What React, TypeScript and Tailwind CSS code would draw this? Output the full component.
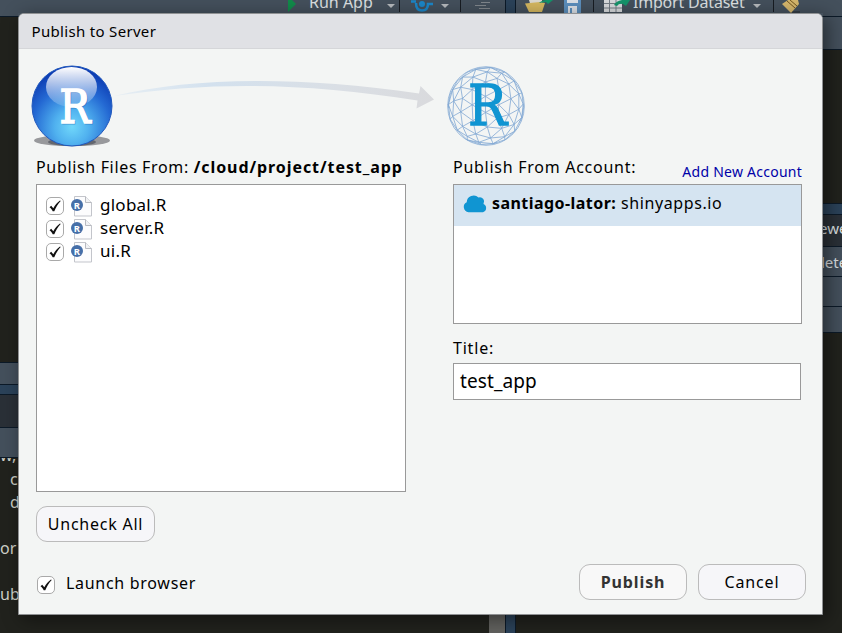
import React from "react";

type Vec = [number, number, number];

const norm = (v: Vec): Vec => {
  const l = Math.hypot(v[0], v[1], v[2]);
  return [v[0] / l, v[1] / l, v[2] / l];
};

// Front-facing edges of a geodesic sphere, projected onto the plane.
function geodesic(n: number, r: number, c: number): string {
  const t = (1 + Math.sqrt(5)) / 2;
  const base: Vec[] = (
    [
      [-1, t, 0], [1, t, 0], [-1, -t, 0], [1, -t, 0],
      [0, -1, t], [0, 1, t], [0, -1, -t], [0, 1, -t],
      [t, 0, -1], [t, 0, 1], [-t, 0, -1], [-t, 0, 1],
    ] as Vec[]
  ).map(norm);
  const faces = [
    [0, 11, 5], [0, 5, 1], [0, 1, 7], [0, 7, 10], [0, 10, 11],
    [1, 5, 9], [5, 11, 4], [11, 10, 2], [10, 7, 6], [7, 1, 8],
    [3, 9, 4], [3, 4, 2], [3, 2, 6], [3, 6, 8], [3, 8, 9],
    [4, 9, 5], [2, 4, 11], [6, 2, 10], [8, 6, 7], [9, 8, 1],
  ];
  const seen = new Set<string>();
  const out: string[] = [];
  const turn = (v: Vec): Vec => {
    const a = 0.35, b = 0.25;
    const x = v[0] * Math.cos(a) + v[2] * Math.sin(a);
    const z = -v[0] * Math.sin(a) + v[2] * Math.cos(a);
    return [x, v[1] * Math.cos(b) - z * Math.sin(b), v[1] * Math.sin(b) + z * Math.cos(b)];
  };
  for (const [A, B, C] of faces) {
    const p = (i: number, j: number): Vec => {
      const k = n - i - j;
      return turn(norm([0, 1, 2].map((d) => base[A][d] * i + base[B][d] * j + base[C][d] * k) as Vec));
    };
    const edge = (u: Vec, v: Vec) => {
      if (u[2] + v[2] < -0.1) return;
      const s = [u, v].map((q) => `${(c + q[0] * r).toFixed(1)} ${(c + q[1] * r).toFixed(1)}`).sort();
      const key = s.join("L");
      if (seen.has(key)) return;
      seen.add(key);
      out.push("M" + key);
    };
    for (let i = 0; i < n; i++)
      for (let j = 0; j < n - i; j++) {
        edge(p(i, j), p(i + 1, j));
        edge(p(i, j), p(i, j + 1));
        edge(p(i + 1, j), p(i, j + 1));
      }
  }
  return out.join("");
}

const MESH = geodesic(3, 38, 39);

const Caret = () => (
  <svg className="h-1 w-2 shrink-0" viewBox="0 0 8 4"><path d="M0 0h8L4 4z" fill="#b5b9bd" /></svg>
);

const Divider = () => <span className="h-3 w-px shrink-0 bg-[#171c22]" />;

const Check = () => (
  <span className="flex h-[18px] w-[18px] shrink-0 items-center justify-center rounded-[5px] border border-[#a9a9a9] bg-white">
    <svg width="14" height="14" viewBox="0 0 14 14">
      <path d="M1.500 8.200 3.200 6.800l2.100 2.500C7 6.300 9 3.700 12 1.500l.7.500C9.900 5 7.900 8.500 6.300 12.200H4.700C3.900 10.500 2.900 9.200 1.500 8.200z" fill="#111" />
    </svg>
  </span>
);

const RFile = () => (
  <svg className="shrink-0" width="22" height="22" viewBox="0 0 22 22">
    <path d="M3.500 1.500h11l6 6v13.500h-17z" fill="#fcfcfd" stroke="#c3c5cb" />
    <path d="M14.500 1.500v6h6" fill="#f1f2f4" stroke="#b8bac0" />
    <circle cx="6" cy="10" r="6" fill="#466fa8" />
    <text x="6" y="13.500" textAnchor="middle" fontFamily="Noto Sans, sans-serif" fontSize="9.500" fontWeight="700" fill="#fff">R</text>
  </svg>
);

const Sphere = () => (
  <svg className="shrink-0" width="82" height="84" viewBox="0 0 82 84">
    <defs>
      <radialGradient id="ball" cx="50%" cy="76%" r="72%">
        <stop offset="0" stopColor="#70d7fa" />
        <stop offset=".3" stopColor="#50b1ef" />
        <stop offset=".68" stopColor="#2469d3" />
        <stop offset="1" stopColor="#0c3bb2" />
      </radialGradient>
      <linearGradient id="gloss" x1="0" y1="0" x2="0" y2="1">
        <stop offset="0" stopColor="#fff" />
        <stop offset=".35" stopColor="#fff" stopOpacity=".7" />
        <stop offset="1" stopColor="#fff" stopOpacity=".12" />
      </linearGradient>
    </defs>
    <ellipse cx="41" cy="75.500" rx="38" ry="5.800" fill="#98999c" />
    <ellipse cx="41" cy="77" rx="24" ry="4" fill="#64676e" />
    <circle cx="41" cy="41" r="40" fill="url(#ball)" stroke="#2058bd" />
    <ellipse cx="40.500" cy="22" rx="25.500" ry="20" fill="url(#gloss)" />
    <text x="45" y="58.500" textAnchor="middle" fontFamily="DejaVu Serif, serif" fontSize="46" fill="#225eae" stroke="#225eae" opacity=".45" textLength="31" lengthAdjust="spacingAndGlyphs">R</text>
    <text x="44" y="57.500" textAnchor="middle" fontFamily="DejaVu Serif, serif" fontSize="46" fill="#fff" stroke="#fff" strokeWidth="1.600" textLength="31" lengthAdjust="spacingAndGlyphs">R</text>
  </svg>
);

const Arrow = () => (
  <svg className="shrink-0" width="336" height="84" viewBox="0 0 336 84">
    <defs>
      <linearGradient id="sweep">
        <stop offset="0" stopColor="#d5e4f2" stopOpacity=".4" />
        <stop offset=".3" stopColor="#d3e1ee" />
        <stop offset=".7" stopColor="#dadfe5" />
        <stop offset="1" stopColor="#d9dadd" />
      </linearGradient>
    </defs>
    <path d="M1 31C81 12 185 11 306 28.500l1.500-7.500 13.500 13.500-17.500 9 1-8C193 18 101 16 1 31z" fill="url(#sweep)" />
  </svg>
);

const Geo = () => (
  <svg className="shrink-0" width="78" height="80" viewBox="0 0 78 78" preserveAspectRatio="none">
    <circle cx="39" cy="39" r="38.300" fill="none" stroke="#82a8d4" strokeWidth=".8" />
    <path d={MESH} fill="none" stroke="#82a8d4" strokeWidth=".8" />
    <text x="40.500" y="58" textAnchor="middle" fontFamily="DejaVu Serif, serif" fontSize="55" fill="#1095d2" stroke="#1095d2" strokeWidth="1.300" textLength="39" lengthAdjust="spacingAndGlyphs">R</text>
  </svg>
);

const btn = "flex h-9 items-center justify-center rounded-[11px] border border-[#bbb]";

function Backdrop() {
  return (
    <div className="flex h-[633px] w-[842px] overflow-hidden bg-[#21221d]">
      <div className="flex w-[505px] flex-col">
        <div className="flex h-4 shrink-0 items-start bg-[#44505c] pl-[288px] text-[#dde0e2]">
          <svg className="h-4 w-2 shrink-0" viewBox="0 0 8 16"><path d="M0-4 8 4 0 12z" fill="#118a4a" /></svg>
          <span className="-mt-[10px] ml-[13px] w-[63px] whitespace-nowrap text-[16px] leading-6">Run App</span>
          <span className="mt-1 ml-[15px] flex"><Caret /></span>
          <span className="ml-1 flex"><Divider /></span>
          <svg className="ml-[11px] h-4 w-[23px] shrink-0" viewBox="0 0 23 16">
            <circle cx="11" cy="4" r="3" fill="#1b86c8" />
            <path d="M0 1.500h5M5 3q0 7.500 6 7.500t6-6.500h5" fill="none" stroke="#1b86c8" strokeWidth="2.500" />
          </svg>
          <span className="mt-1 ml-[7px] flex"><Caret /></span>
          <span className="ml-[11px] flex"><Divider /></span>
          <svg className="ml-3.5 h-3 w-4 shrink-0" viewBox="0 0 16 12"><path d="M6 2.500h9M0 5.500h11M4 8.500h11" stroke="#80868c" /></svg>
        </div>
        <div className="h-[346px] shrink-0 border-t border-[#0c1a28]" />
        <div className="h-[22px] shrink-0 border-t border-[#0c1a28] bg-[#44505c]" />
        <div className="h-[11px] shrink-0 border-y border-[#0c1a28] bg-[#2b4259]" />
        <div className="h-8 shrink-0 bg-[#2a3037]" />
        <div className="h-[31px] shrink-0 border-y border-[#0c1a28] bg-[#44505c]" />
        <div className="flex grow">
          <div className="w-[489px] overflow-hidden text-[16px] leading-[23px] text-[#cfd0c8]">
            <div className="-mt-[14px] h-[23px] w-[22px]">w,</div>
            <div className="mt-px h-[23px] pl-[10px]">c</div>
            <div className="h-[23px] pl-[10px]">d</div>
            <div className="mt-[23px] h-[23px]">or</div>
            <div className="mt-[23px] h-[23px]">ub</div>
          </div>
          <div className="w-4 bg-[#62625f]" />
        </div>
      </div>
      <div className="w-[11px] shrink-0 border-x border-[#0c1a28] bg-[#2b4259]" />
      <div className="flex w-[326px] flex-col text-[#dde0e2]">
        <div className="flex h-4 shrink-0 items-start bg-[#44505c] pl-[9px]">
          <svg className="h-[13px] w-7 shrink-0" viewBox="0 0 28 13">
            <path d="M4 0h13v7H6z" fill="#dcdad0" />
            <path d="M0 3.500 15 2l5 1-3 9H4z" fill="#d5b75f" />
            <path d="M14 3q3-3 8-3h6l-5 4-2-2z" fill="#14946b" />
          </svg>
          <svg className="ml-[11px] h-[13px] w-[17px] shrink-0" viewBox="0 0 17 13"><path d="M0 0h17v13H0z" fill="#5c8fbd" /><path d="M3 0h11v3H3zM4 6h9v7H4z" fill="#dce1e7" /><path d="M6 8h2v5H6z" fill="#5c8fbd" /></svg>
          <span className="ml-3 flex"><Divider /></span>
          <svg className="ml-2.5 h-3 w-[26px] shrink-0" viewBox="0 0 26 12">
            <path d="M0 0h18v12H0z" fill="#d7dadd" />
            <path d="M0 3.500h18M0 8h18M5.500 0v12M12 0v12" stroke="#747d86" />
            <path d="M10 5q2-4 8-5h8l-4 6-3-2q-4-1-6 2z" fill="#14946b" />
          </svg>
          <span className="-mt-[10px] ml-[3px] w-[112px] whitespace-nowrap text-[16px] leading-6 tracking-[-0.2px]">Import Dataset</span>
          <span className="mt-1 ml-[8px] flex"><Caret /></span>
          <span className="ml-3 flex"><Divider /></span>
          <svg className="ml-2 h-[13px] w-[19px] shrink-0" viewBox="0 0 19 13"><path d="M8 11h10v2H8z" fill="#343d46" /><path d="M0 4 6 0h10l1 4-8 9z" fill="#d5b66c" /><path d="m5 1 8 7M8 0l7 6" stroke="#72551f" /></svg>
        </div>
        <div className="h-[34px] shrink-0 border-y border-[#0c1a28] bg-[#44505c]" />
        <div className="h-[153px] shrink-0" />
        <div className="h-[11px] shrink-0 border-t border-[#0c1a28] bg-[#2b4259]" />
        <div className="h-8 shrink-0 overflow-hidden border-t border-[#0c1a28] bg-[#2a3037] pl-[303px] text-[15px] leading-[27px]">ewer</div>
        <div className="h-[30px] shrink-0 overflow-hidden border-t border-[#0c1a28] bg-[#44505c] pl-[305px] text-[15px] leading-[30px]">lete</div>
        <div className="h-[30px] shrink-0 border-t border-[#0c1a28] bg-[#44505c]" />
        <div className="h-[27px] shrink-0 border-y border-[#0c1a28] bg-[#44505c]" />
      </div>
    </div>
  );
}

function Dialog() {
  return (
    <section className="absolute top-[13px] left-[18px] flex h-[602px] w-[805px] flex-col overflow-hidden rounded-t-[6px] border border-[#8f9193] bg-[#f3f5f4]">
      <header className="h-[35px] shrink-0 border-b border-[#d5d6d9] bg-[#e0e1e5] pl-[12.500px] text-[15px] leading-[34px] tracking-[0.32px]">Publish to Server</header>
      <div className="flex h-[84px] shrink-0 pl-[12px] mt-[16px]">
        <Sphere />
        <Arrow />
        <span className="-ml-[2px] pt-px"><Geo /></span>
      </div>
      <div className="flex grow pl-[17px] pr-5">
        <div className="flex w-[370px] flex-col">
          <div className="h-[35px] whitespace-nowrap text-[16px] leading-[36px]">
            <span className="tracking-[0.660px]">Publish Files From: </span><b className="tracking-[0.930px]">/cloud/project/test_app</b>
          </div>
          <div className="h-[308px] border border-[#999] bg-white pt-[9px] pl-[9px]">
            {["global.R", "server.R", "ui.R"].map((f) => (
              <div key={f} className="flex h-[23.300px] items-center text-[17px] leading-[23px] tracking-[0.25px]">
                <Check />
                <span className="ml-[7px] flex"><RFile /></span>
                <span className="-mt-[3px] ml-[7px]">{f}</span>
              </div>
            ))}
          </div>
          <div className={`${btn} mt-[14px] w-[119px] bg-[#f6f6f9] text-[16px] tracking-[0.750px]`}>Uncheck All</div>
          <div className="mt-8 ml-px flex h-[21px] items-center text-[16px] leading-[21px] tracking-[0.700px]"><Check /><span className="-mt-0.5 ml-[11px]">Launch browser</span></div>
        </div>
        <div className="ml-[47px] flex w-[349px] flex-col">
          <div className="flex h-[35px] justify-between whitespace-nowrap">
            <span className="text-[16px] leading-[36px] tracking-[0.730px]">Publish From Account:</span>
            <span className="pt-[5px] text-[14px] leading-[36px] tracking-[0.25px] text-[#0000a8]">Add New Account</span>
          </div>
          <div className="h-[140px] border border-[#999] bg-white">
            <div className="flex h-[41px] items-center bg-[#d5e4f1] pb-1.5 pl-[9px] text-[16px] whitespace-pre">
              <svg className="mt-px mr-1" width="25" height="19" viewBox="0 0 25 19"><path d="M5.500 18.200a5.300 5.300 0 0 1-1.800-10A7 7 0 0 1 15.500 3.500a4.400 4.400 0 0 1 5 6.600A4.300 4.300 0 0 1 20 18.200z" fill="#1095d2" /></svg>
              <b className="tracking-[0.450px]">santiago-lator:</b><span className="tracking-[0.600px]"> shinyapps.io</span>
            </div>
          </div>
          <div className="mt-[7px] h-[32px] text-[16px] leading-[34px] tracking-[0.800px]">Title:</div>
          <div className="h-[37px] w-[348px] border border-[#999] bg-white pl-[6px] text-[19px] leading-[34px] tracking-[0.1px]">test_app</div>
          <div className="mt-[164px] -mr-1 flex justify-end gap-[11px] text-[16px]">
            <div className={`${btn} w-[108px] bg-[#f8f8f8] font-bold tracking-[0.900px] text-[#333]`}>Publish</div>
            <div className={`${btn} w-[108px] bg-[#f6f6f9] tracking-[0.850px]`}>Cancel</div>
          </div>
        </div>
      </div>
    </section>
  );
}

export default function App() {
  return (
    <main className="relative h-[633px] w-[842px] overflow-hidden font-['Noto_Sans',sans-serif] text-black">
      <Backdrop />
      <div className="absolute top-[13px] left-[18px] h-[602px] w-[805px] shadow-[4px_4px_18px_#0007]" />
      <Dialog />
    </main>
  );
}
